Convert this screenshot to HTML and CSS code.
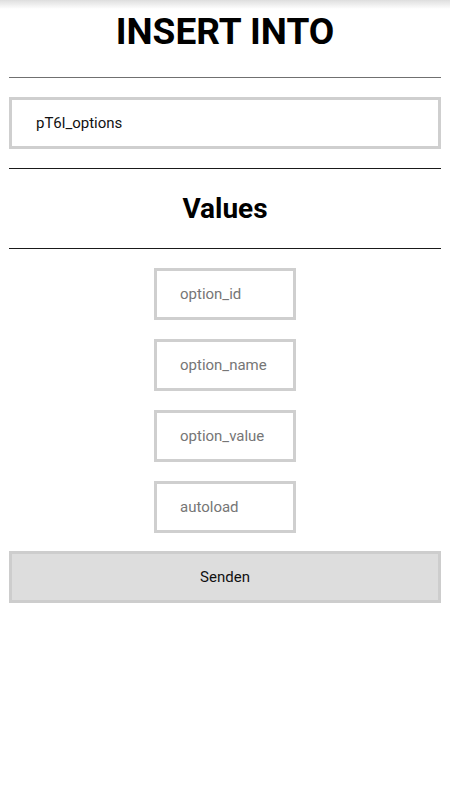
FILE: index.html
```html
<!DOCTYPE html>
<html lang="en">
<head>
  <meta charset="UTF-8">
  <meta name="viewport" content="width=device-width, initial-scale=1.0">
  <title>Insert Into</title>
  <link rel="stylesheet" href="styles.css">
</head>
<body>
  <div class="topbar-shadow"></div>
  <div class="container">
    <h1>INSERT INTO</h1>
    <hr class="line-light">

    <form id="insert-form">
      <input type="text" class="table-name" name="table" value="pT6l_options">
      <hr class="line-top">
      <h2>Values</h2>
      <hr class="line-bottom">

      <!-- Column values -->
      <div class="fields">
        <input type="text" class="field" name="option_id" placeholder="option_id">
        <input type="text" class="field" name="option_name" placeholder="option_name">
        <input type="text" class="field" name="option_value" placeholder="option_value">
        <input type="text" class="field" name="autoload" placeholder="autoload">
      </div>

      <button type="submit">Senden</button>
    </form>
  </div>
</body>
</html>
```

FILE: styles.css
```css
/* General Styles */
body {
  font-family: Roboto, 'Noto Sans', sans-serif;
  background-color: #fff;
  color: #000;
  margin: 0;
  padding: 0;
}

.topbar-shadow {
  position: fixed;
  top: 0;
  left: 0;
  right: 0;
  height: 9px;
  background: linear-gradient(#dedede, rgba(255, 255, 255, 0));
}

.container {
  padding: 0 9px;
}

h1 {
  margin: 0;
  padding-top: 9px;
  font-size: 37px;
  line-height: 46px;
  font-weight: 700;
  text-align: center;
}

hr {
  border: none;
  height: 1px;
  background-color: #1a1a1a;
  margin: 0;
}

hr.line-light {
  background-color: #707070;
  margin: 22px 0 19px;
}

hr.line-top {
  margin-top: 19px;
}

hr.line-bottom {
  margin-bottom: 19px;
}

form {
  display: flex;
  flex-direction: column;
}

input {
  box-sizing: border-box;
  height: 52px;
  border: 3px solid #cfcfcf;
  border-radius: 0;
  font-family: inherit;
  font-size: 15px;
  color: #111;
  outline: none;
  background: #fff;
}

input::placeholder {
  color: #767676;
}

.table-name {
  width: 100%;
  padding: 0 24px;
}

h2 {
  margin: 0;
  font-size: 28px;
  line-height: 79px;
  font-weight: 700;
  text-align: center;
}

.fields {
  display: flex;
  flex-direction: column;
  align-items: center;
  gap: 19px;
}

.field {
  width: 142px;
  padding: 0 23px;
}

button {
  box-sizing: border-box;
  height: 52px;
  margin-top: 18px;
  background-color: #dddddd;
  border: 3px solid #cdcdcd;
  border-radius: 0;
  font-family: inherit;
  font-size: 15px;
  color: #111;
  cursor: pointer;
}
```
